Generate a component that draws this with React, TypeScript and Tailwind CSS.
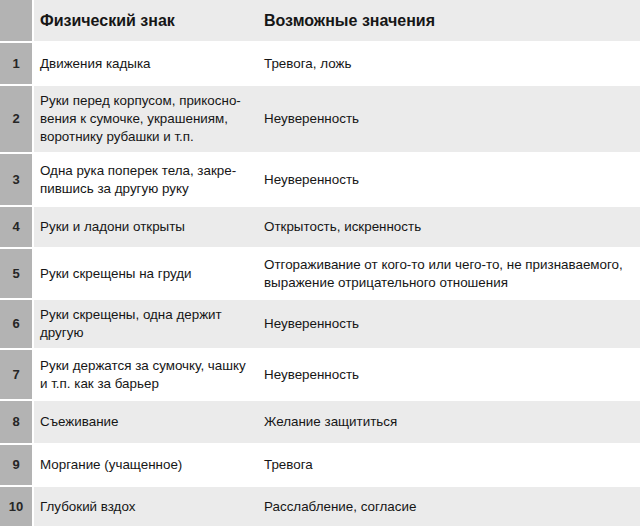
const rows: { n: string; sign: string[]; meaning: string[]; h: string; bg: string }[] = [
  { n: "1", sign: ["Движения кадыка"], meaning: ["Тревога, ложь"], h: "h-[41px]", bg: "bg-white" },
  {
    n: "2",
    sign: ["Руки перед корпусом, прикосно-", "вения к сумочке, украшениям,", "воротнику рубашки и т.п."],
    meaning: ["Неуверенность"],
    h: "h-[66px]",
    bg: "bg-[#ebebeb]",
  },
  {
    n: "3",
    sign: ["Одна рука поперек тела, закре-", "пившись за другую руку"],
    meaning: ["Неуверенность"],
    h: "h-[51px]",
    bg: "bg-white",
  },
  { n: "4", sign: ["Руки и ладони открыты"], meaning: ["Открытость, искренность"], h: "h-[40px]", bg: "bg-[#ebebeb]" },
  {
    n: "5",
    sign: ["Руки скрещены на груди"],
    meaning: ["Отгораживание от кого-то или чего-то, не признаваемого,", "выражение отрицательного отношения"],
    h: "h-[49px]",
    bg: "bg-white",
  },
  {
    n: "6",
    sign: ["Руки скрещены, одна держит", "другую"],
    meaning: ["Неуверенность"],
    h: "h-[48px]",
    bg: "bg-[#ebebeb]",
  },
  {
    n: "7",
    sign: ["Руки держатся за сумочку, чашку", "и т.п. как за барьер"],
    meaning: ["Неуверенность"],
    h: "h-[49px]",
    bg: "bg-white",
  },
  { n: "8", sign: ["Съеживание"], meaning: ["Желание защититься"], h: "h-[42px]", bg: "bg-[#ebebeb]" },
  { n: "9", sign: ["Моргание (учащенное)"], meaning: ["Тревога"], h: "h-[40px]", bg: "bg-white" },
  { n: "10", sign: ["Глубокий вздох"], meaning: ["Расслабление, согласие"], h: "h-[40px]", bg: "bg-[#ebebeb]" },
];

function Lines({ lines }: { lines: string[] }) {
  return (
    <div className="leading-[18px]">
      {lines.map((l) => (
        <div key={l}>{l}</div>
      ))}
    </div>
  );
}

export default function App() {
  return (
    <div
      className="flex w-[640px] flex-col gap-[2px] bg-white text-[13.4px] text-[#161616]"
      style={{ fontFamily: '"Liberation Sans", Arial, sans-serif' }}
    >
      <div className="flex h-[41px] bg-[#ebebeb]">
        <div className="w-[32px] shrink-0 bg-[#b3b3b3]" />
        <div className="w-[2px] shrink-0 bg-white" />
        <div className="flex w-[224px] items-center pl-[6px] text-[16px] font-bold">Физический знак</div>
        <div className="flex flex-1 items-center pl-[6px] text-[16px] font-bold">Возможные значения</div>
      </div>
      {rows.map((r) => (
        <div key={r.n} className={`flex ${r.h} ${r.bg}`}>
          <div className="flex w-[32px] shrink-0 items-center justify-center bg-[#b3b3b3] text-[13px] font-bold text-[#262626]">
            {r.n}
          </div>
          <div className="w-[2px] shrink-0 bg-white" />
          <div className="flex w-[224px] items-center pl-[6px]">
            <Lines lines={r.sign} />
          </div>
          <div className="flex flex-1 items-center pl-[6px]">
            <Lines lines={r.meaning} />
          </div>
        </div>
      ))}
    </div>
  );
}
